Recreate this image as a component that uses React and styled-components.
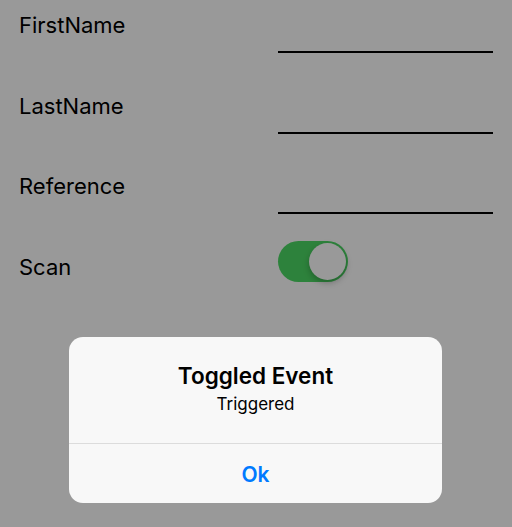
import React, { useState } from 'react';
import styled, { createGlobalStyle } from 'styled-components';

const GlobalStyle = createGlobalStyle`
  html, body {
    margin: 0;
    padding: 0;
    background: #ffffff;
  }
  body {
    font-family: Inter, "Noto Sans", "Liberation Sans", sans-serif;
    color: #000;
  }
`;

const Screen = styled.div`
  position: relative;
  width: 512px;
  height: 527px;
  overflow: hidden;
  background: #ffffff;
`;

const Form = styled.div`
  display: flex;
  flex-direction: column;
`;

const Row = styled.div`
  display: grid;
  grid-template-columns: 259px 215px;
  height: 80.5px;
  padding-left: 19px;
  align-items: start;
`;

const Label = styled.div`
  font-size: 22px;
  line-height: 26px;
  padding-top: 12px;
  color: #000;
`;

const Field = styled.div`
  height: 51px;
  border-bottom: 2px solid #000;
`;

const Switch = styled.div`
  width: 70px;
  height: 41px;
  margin-top: -1px;
  border-radius: 21px;
  background: ${p => (p.on ? '#4cd964' : '#e5e5e5')};
  display: flex;
  align-items: center;
  justify-content: ${p => (p.on ? 'flex-end' : 'flex-start')};
  padding: 2px;
  box-sizing: border-box;
`;

const Thumb = styled.div`
  width: 37px;
  height: 37px;
  border-radius: 50%;
  background: #ffffff;
  box-shadow: 0 3px 6px rgba(0, 0, 0, 0.25);
`;

const Overlay = styled.div`
  position: absolute;
  inset: 0;
  background: rgba(0, 0, 0, 0.4);
  display: flex;
  align-items: flex-end;
  justify-content: center;
  padding-bottom: 24px;
  box-sizing: border-box;
`;

const Dialog = styled.div`
  width: 373px;
  margin-right: 1px;
  background: #f8f8f8;
  border-radius: 14px;
  overflow: hidden;
  display: flex;
  flex-direction: column;
`;

const Body = styled.div`
  display: flex;
  flex-direction: column;
  align-items: center;
  padding: 25px 16px 0;
  height: 107px;
  box-sizing: border-box;
  border-bottom: 1px solid #dcdcdc;
`;

const Title = styled.div`
  font-size: 22.5px;
  font-weight: 600;
  line-height: 28px;
  color: #000;
`;

const Message = styled.div`
  font-size: 17px;
  line-height: 22px;
  margin-top: 3px;
  color: #000;
`;

const Action = styled.button`
  height: 59px;
  border: none;
  background: transparent;
  font-family: inherit;
  font-size: 21px;
  font-weight: 600;
  color: #007aff;
  padding: 2px 0 0;
`;

const fields = ['FirstName', 'LastName', 'Reference'];

export default function App() {
  const [scan, setScan] = useState(true);
  return (
    <Screen>
      <GlobalStyle />
      <Form>
        {fields.map(name => (
          <Row key={name}>
            <Label>{name}</Label>
            <Field />
          </Row>
        ))}
        <Row>
          <Label>Scan</Label>
          <Switch on={scan} onClick={() => setScan(!scan)}>
            <Thumb />
          </Switch>
        </Row>
      </Form>
      <Overlay>
        <Dialog>
          <Body>
            <Title>Toggled Event</Title>
            <Message>Triggered</Message>
          </Body>
          <Action>Ok</Action>
        </Dialog>
      </Overlay>
    </Screen>
  );
}
